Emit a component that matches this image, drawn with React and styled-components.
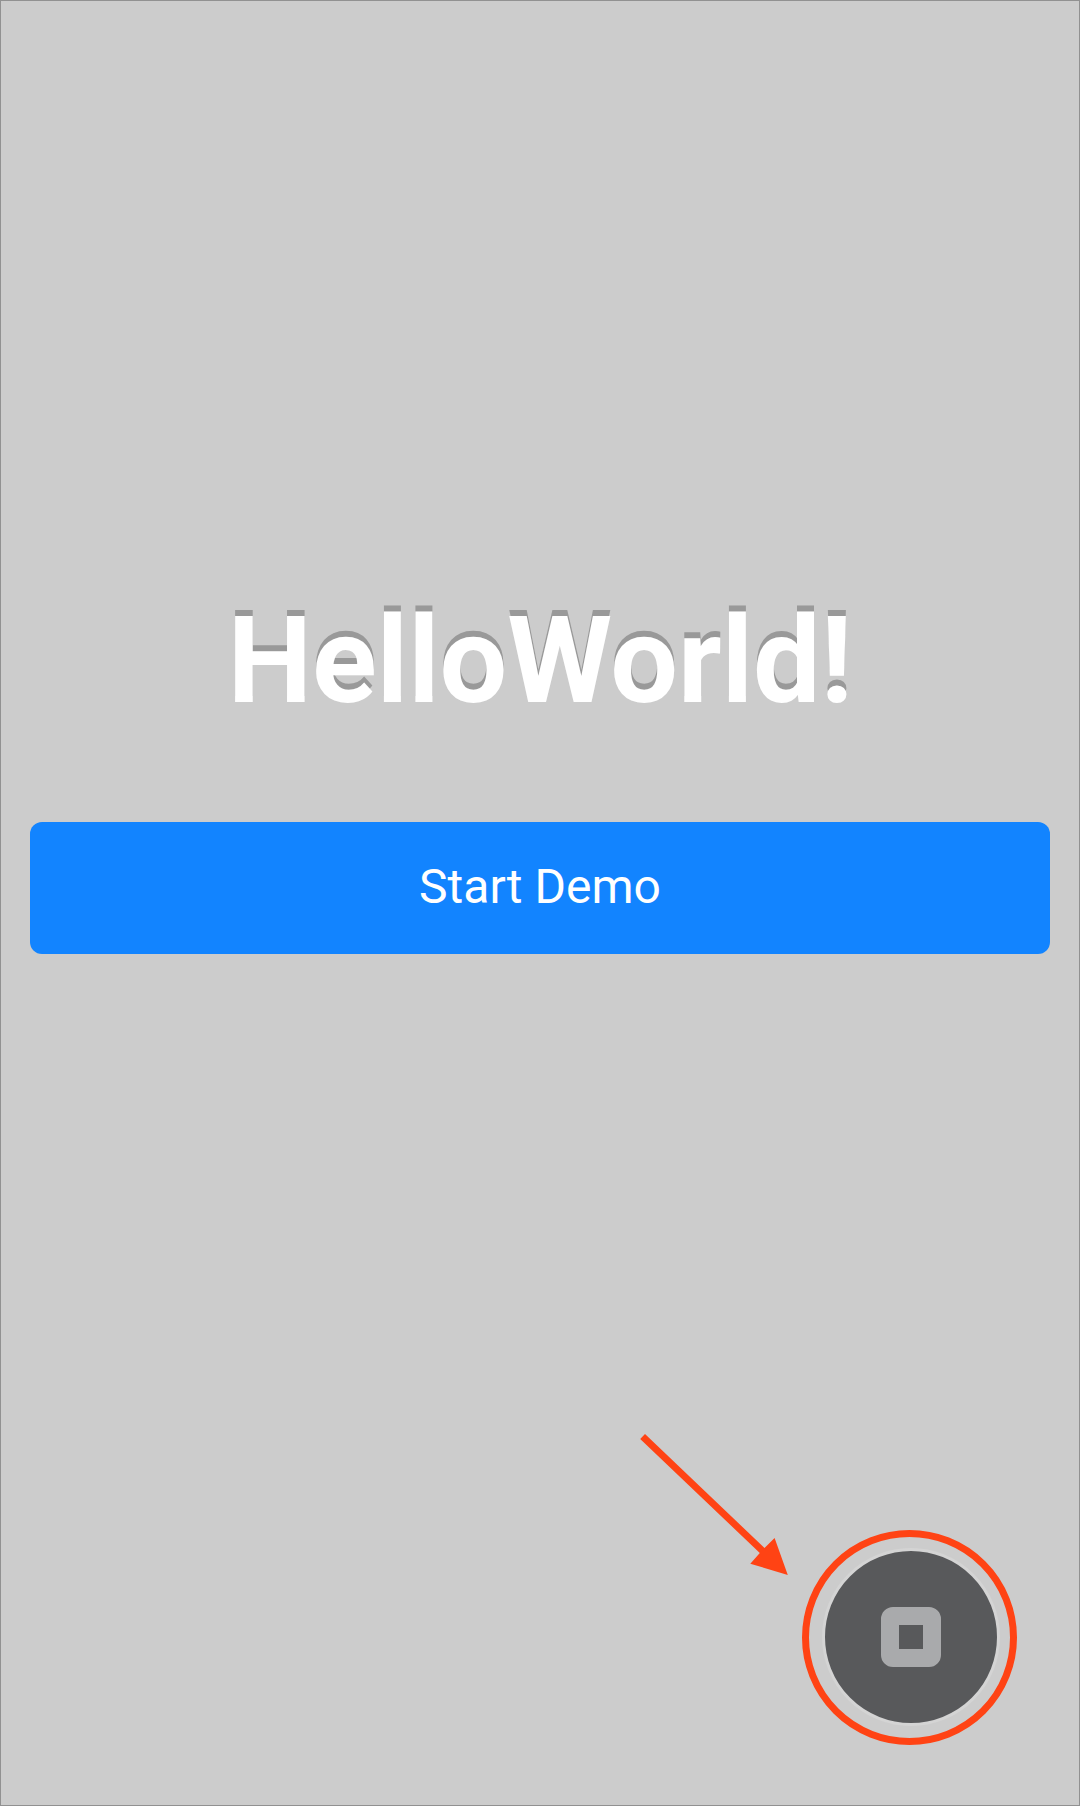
import React from "react";
import styled, { createGlobalStyle } from "styled-components";

const GlobalStyle = createGlobalStyle`
  *, *::before, *::after { box-sizing: border-box; }
  body { margin: 0; background: #ccc; }
`;

const Screen = styled.main`
  position: relative;
  display: flex;
  flex-direction: column;
  height: 1806px;
  padding: 590px 29px 0;
  border: 1px solid #919191;
  background: #ccc;
  font-family: Roboto, "Liberation Sans", sans-serif;
  overflow: hidden;
`;

const Title = styled.h1`
  margin: 0 0 91px;
  color: #fff;
  font-size: 120px;
  font-weight: 700;
  line-height: 140px;
  letter-spacing: -0.2px;
  text-align: center;
  white-space: nowrap;
  text-shadow: 0 -6px 0 #999;
`;

const StartButton = styled.button`
  height: 132px;
  padding: 0 0 2px;
  border: 0;
  border-radius: 12px;
  background: #1284ff;
  color: #fff;
  font-family: inherit;
  font-size: 48px;
  line-height: 56px;
`;

const Highlight = styled.div`
  position: absolute;
  right: 62px;
  bottom: 60px;
  display: grid;
  place-items: center;
  width: 215px;
  height: 215px;
  border: 7px solid #ff4314;
  border-radius: 50%;
`;

const DebugButton = styled.button`
  position: relative;
  left: 1.5px;
  top: -0.5px;
  display: grid;
  place-items: center;
  width: 178px;
  height: 178px;
  padding: 0;
  border: 3px solid #d4d4d4;
  border-radius: 50%;
  background: #58595b;
`;

const StopGlyph = styled.span`
  width: 60px;
  height: 60px;
  border: 18px solid #a9aaac;
  border-radius: 12px;
`;

const Arrow = styled.svg`
  position: absolute;
  left: 629px;
  top: 1419px;
  fill: #ff4314;
`;

export default function App() {
  return (
    <>
      <GlobalStyle />
      <Screen>
        <Title>HelloWorld!</Title>
        <StartButton type="button">Start Demo</StartButton>
        <Arrow width="180" height="170" viewBox="0 0 180 170" aria-hidden="true">
          <path d="M15 14 L134.5 128 L144.6 118 L157.8 155 L120.3 143.7 L129.8 133 L10.2 19 Z" />
        </Arrow>
        <Highlight>
          <DebugButton type="button" aria-label="Debug menu">
            <StopGlyph />
          </DebugButton>
        </Highlight>
      </Screen>
    </>
  );
}
